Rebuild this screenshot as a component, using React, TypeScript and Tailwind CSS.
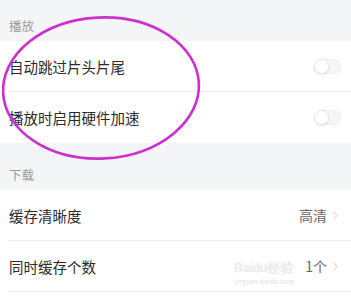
import { ChevronRight } from 'lucide-react';

const font = { fontFamily: '"Noto Sans CJK SC", "Noto Sans", sans-serif' };

function Toggle() {
  return (
    <div className="relative w-[27px] h-[15px] rounded-full bg-[#f6f6f6] border border-[#ededed]">
      <div className="absolute left-[-1px] top-[-1px] w-[15px] h-[15px] rounded-full bg-white border border-[#e8e8e8] shadow-[0_1px_2px_rgba(0,0,0,0.1)]" />
    </div>
  );
}

function Row({ label, right, last }: { label: string; right: React.ReactNode; last?: boolean }) {
  return (
    <div className="flex items-center h-[51px] pl-[9px] pr-[9px] relative">
      <span className="flex-1 text-[14.5px] text-[#2a2a2a]">{label}</span>
      {right}
      {!last && <div className="absolute left-[8px] right-0 bottom-0 h-px bg-[#ececec]" />}
    </div>
  );
}

function Value({ text }: { text: string }) {
  return (
    <div className="flex items-center gap-[2px] text-[14px] text-[#666]">
      <span>{text}</span>
      <ChevronRight className="w-[13px] h-[13px] text-[#b0b0b0]" strokeWidth={1.3} />
    </div>
  );
}

export default function App() {
  return (
    <div className="relative w-[351px] h-[304px] bg-[#f4f5f6] overflow-hidden" style={font}>
      <div className="h-[41px] flex items-end pl-[9px] pb-[5px] text-[12.5px] text-[#9a9a9a]">播放</div>
      <div className="bg-white">
        <Row label="自动跳过片头片尾" right={<div className="mr-[1px]"><Toggle /></div>} />
        <Row label="播放时启用硬件加速" right={<div className="mr-[1px]"><Toggle /></div>} last />
      </div>
      <div className="h-[47px] flex items-center pl-[9px] pt-[18px] text-[12.5px] text-[#9a9a9a]">下载</div>
      <div className="bg-white">
        <Row label="缓存清晰度" right={<Value text="高清" />} />
        <Row label="同时缓存个数" right={<Value text="1个" />} />
        <div className="h-[20px]" />
      </div>

      {/* watermark */}
      <div className="absolute left-[234px] top-[258px] flex flex-col items-start opacity-60 pointer-events-none">
        <span className="text-[13px] text-[#e4e4e4] [text-shadow:0_0_1px_#bbb]" style={{ fontFamily: '"Liberation Sans", "Noto Sans CJK SC", sans-serif' }}>Baidu经验</span>
        <span className="text-[7px] text-[#ccc] -mt-[2px]">jingyan.baidu.com</span>
      </div>

      <svg className="absolute left-0 top-0 pointer-events-none" width="351" height="304">
        <ellipse cx="101" cy="88" rx="98" ry="70.5" fill="none" stroke="#cc2fd0" strokeWidth="2.6" transform="rotate(-3 101 88)" />
      </svg>
    </div>
  );
}
